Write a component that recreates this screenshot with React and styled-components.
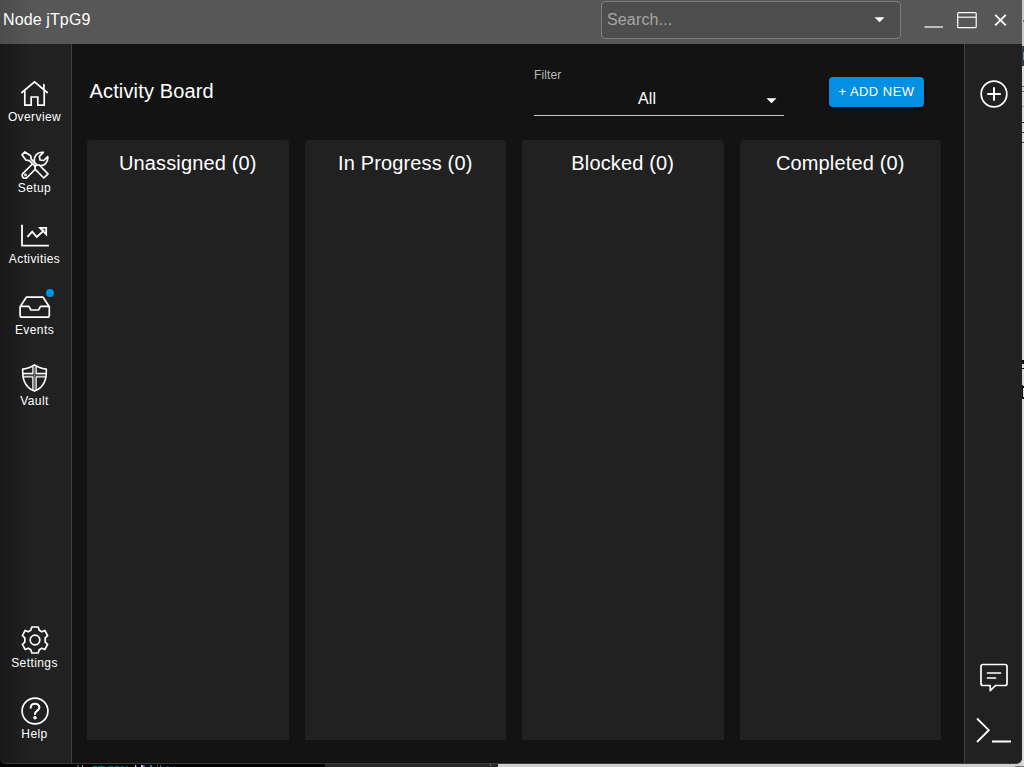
import React from "react";
import styled, { createGlobalStyle } from "styled-components";

const GlobalStyle = createGlobalStyle`
  * { box-sizing: border-box; }
  html, body { margin: 0; height: 100%; overflow: hidden; background: #d4d4d6; }
  body { font-family: "Liberation Sans", Arial, sans-serif; color: #fff; }
`;

const Desktop = styled.div`
  position: relative;
  width: 1024px;
  height: 767px;
  overflow: hidden;
  background: linear-gradient(90deg, #000 325px, #292929 325px, #292929 498px, #cfcfd1 498px);
`;

const Window = styled.div`
  display: flex;
  flex-direction: column;
  width: 1022px;
  height: 764px;
  background: #131313;
  border-bottom: 1px solid #3a3a3a;
  border-radius: 0 0 6px 6px;
  overflow: hidden;
`;

const TitleBar = styled.header`
  display: flex;
  align-items: center;
  flex: none;
  height: 44px;
  padding: 0 13px 4px 3px;
  background: linear-gradient(90deg, #4c4c4c, #575757 34px);
`;

const WindowTitle = styled.div`
  flex: 1;
  font-size: 16px;
  line-height: 20px;
  letter-spacing: 0.12px;
`;

const Search = styled.div`
  display: flex;
  align-items: center;
  justify-content: space-between;
  width: 300px;
  height: 38px;
  margin: 0 23px 0 0;
  padding: 0 15px 0 5px;
  border: 1px solid #7b7b7b;
  border-radius: 4px;
  background: #4e4e4e;
  color: #a6a6a6;
  font-size: 16px;
  letter-spacing: 0.15px;
`;

const WindowButtons = styled.div`
  display: flex;
  align-items: center;
  svg { display: block; }
`;

const Body = styled.div`
  display: flex;
  flex: 1;
  min-height: 0;
`;

const Sidebar = styled.nav`
  display: flex;
  flex-direction: column;
  width: 72px;
  padding: 36px 2px 0 0;
  border-right: 1px solid #404040;
  background: linear-gradient(90deg, #191919, #212121 32px);
`;

const NavItem = styled.div`
  position: relative;
  display: flex;
  flex-direction: column;
  align-items: center;
  flex: none;
  height: 71px;
  margin-top: ${(p) => (p.$push ? "auto" : 0)};
  font-size: 12px;
  line-height: 14px;
  letter-spacing: 0.4px;
  &:last-child { height: 66px; }
  svg { display: block; flex: none; }
`;

const NavLabel = styled.span`
  margin-top: 2px;
  white-space: nowrap;
`;

const Badge = styled.i`
  position: absolute;
  top: -4px;
  left: 46px;
  width: 8px;
  height: 8px;
  border-radius: 50%;
  background: #0390e3;
`;

const Main = styled.main`
  display: flex;
  flex-direction: column;
  flex: 1;
  padding: 0 23px 23px 15px;
`;

const Toolbar = styled.div`
  display: flex;
  align-items: flex-start;
  height: 96px;
  padding: 24px 17px 0 2.5px;
`;

const PageTitle = styled.h1`
  flex: 1;
  margin: 11px 0 0;
  font-size: 20px;
  line-height: 24px;
  font-weight: 400;
  letter-spacing: 0.15px;
`;

const FilterField = styled.div`
  width: 250px;
  height: 48px;
  margin-right: 45px;
  border-bottom: 1px solid #c4c4c4;
`;

const FilterLabel = styled.div`
  font-size: 12px;
  line-height: 14px;
  letter-spacing: 0.1px;
  color: #b8b8b8;
`;

const FilterValue = styled.div`
  display: flex;
  align-items: center;
  height: 33px;
  padding-right: 7px;
  font-size: 16px;
  span { flex: 1; padding: 1px 6px 0 0; text-align: center; letter-spacing: 0.15px; }
  svg { margin-top: 4px; }
`;

const AddButton = styled.button`
  width: 95px;
  height: 30px;
  margin-top: 9px;
  padding: 0 0 1px;
  border: 0;
  border-radius: 4px;
  background: #0390e3;
  box-shadow: 0 1px 3px #000;
  color: #fff;
  font: 13px "Liberation Sans", Arial, sans-serif;
  letter-spacing: 0.46px;
  white-space: nowrap;
`;

const Board = styled.div`
  display: grid;
  grid-template-columns: repeat(4, 1fr);
  gap: 16px;
  flex: 1;
`;

const Column = styled.section`
  padding-top: 11px;
  border-radius: 4px 4px 0 0;
  background: #212121;
  text-align: center;
  font-size: 20px;
  line-height: 24px;
  letter-spacing: 0.15px;
`;

const Rail = styled.aside`
  display: flex;
  flex-direction: column;
  align-items: center;
  width: 58px;
  padding: 36px 0 16px;
  border-left: 1px solid #404040;
  background: #212121;
  svg { display: block; flex: none; }
`;

const Spacer = styled.div`
  flex: 1;
`;

/* Slivers of the applications lying behind the window. */
const Speck = styled.i`
  position: absolute;
  left: ${(p) => p.$x}px;
  top: ${(p) => p.$y}px;
  width: ${(p) => p.$w}px;
  height: ${(p) => p.$h}px;
  background: ${(p) => p.$c};
`;

const specks = [
  [77, 765, 2, 2, "#4b4b4b"], [82, 765, 1, 2, "#c9b878"], [93, 766, 4, 1, "#087171"],
  [98, 766, 7, 1, "#086767"], [108, 766, 5, 1, "#075c60"], [115, 766, 4, 1, "#087171"],
  [121, 766, 2, 1, "#087171"], [126, 766, 2, 1, "#075c60"], [135, 765, 1, 2, "#c9c9c9"],
  [136, 765, 1, 2, "#2929a0"], [141, 765, 2, 2, "#d3cfc8"], [143, 765, 2, 2, "#3543b0"],
  [150, 765, 2, 2, "#1a8085"], [157, 765, 1, 2, "#315ca0"], [160, 765, 1, 2, "#1a8085"],
  [166, 766, 3, 1, "#064246"], [174, 766, 1, 1, "#064246"], [490, 764, 1, 2, "#777"],
  [1022, 0, 2, 46, "#c8cad0"], [1022, 46, 2, 20, "#30434f"], [1022, 66, 2, 701, "#dddddf"],
  [1023, 20, 1, 2, "#777"], [1023, 52, 1, 8, "#78909e"], [1022, 86, 2, 1, "#777"],
  [1022, 91, 2, 1, "#777"], [1022, 106, 2, 1, "#aaa"], [1022, 122, 2, 1, "#111"],
  [1022, 132, 2, 1, "#444"], [1022, 142, 2, 1, "#444"], [1022, 360, 2, 4, "#111"],
  [1022, 368, 2, 1, "#111"], [1022, 385, 1, 14, "#111"], [1023, 386, 1, 2, "#111"],
  [1023, 397, 1, 2, "#111"], [1015, 766, 9, 1, "#777"],
];

const Icon = ({ w = 28, h = 28, sw = 1.7, children }) => (
  <svg width={w} height={h} viewBox={`0 0 ${w} ${h}`} fill="none" stroke="#fff" strokeWidth={sw} strokeLinecap="round" strokeLinejoin="round">
    {children}
  </svg>
);

const Caret = () => (
  <svg width="11" height="6" viewBox="0 0 11 6"><path d="M0.5 0.3H10.5L5.5 5.3Z" fill="#fff" /></svg>
);

const HomeIcon = () => (
  <Icon>
    <path d="M.9 12.5L13.5 1.9L26.2 12.5M3.8 10.8V25.2H10.2V17H16.8V25.2H23.2V10.8M22.9 4.5V9.5" strokeLinejoin="miter" />
  </Icon>
);

const ToolsIcon = () => (
  <Icon sw={1.7}>
    <path d="M1 3.8L3.7 1L9.7 4.8L10.2 8.2L15.8 13.8L14.2 15.4L8.4 9.7L5 9.2Z" />
    <path d="M15.8 13.8L18.2 14L27 22.8L22.8 27L14 18.2L14.2 15.4" />
    <path d="M13.5 11.2C12.4 5.6 15.7 0.8 22.4 1.3L18.4 5.3L19 9L22.7 9.5L26.7 5.6C27.4 11.8 23 15.4 18.7 14.3M11.4 13L1.8 22.6C-.3 25.8 3.3 28.5 6 26.5L13.5 19" />
    <circle cx="4.5" cy="23.9" r=".5" />
  </Icon>
);

const ChartIcon = () => (
  <Icon sw={1.8}>
    <path d="M1 3.6V23.7H27" strokeLinecap="square" strokeLinejoin="miter" />
    <path d="M6.4 14.8L11.2 9.6L15.8 15L23.2 8.2M19 5.8H25.2V12.2Z" strokeLinejoin="miter" strokeLinecap="butt" />
  </Icon>
);

const InboxIcon = () => (
  <Icon w={32}>
    <path d="M7.3 4.2H24.1L30.3 13.7V22.2Q30.3 24.2 28.3 24.2H3.1Q1.1 24.2 1.1 22.2V13.7ZM1.5 13.4H9.9L11.9 17H19.5L21.5 13.4H29.9" />
  </Icon>
);

const ShieldIcon = () => (
  <Icon sw={1.6}>
    <path d="M13.5 .9C9.7 3.7 5.7 4.5 1.7 5.1C1.2 15.2 3.4 23.3 13.5 27.1C23.6 23.3 25.8 15.2 25.3 5.1C21.3 4.5 17.3 3.7 13.5 .9Z" />
    <path d="M11.9 3V9.5H1.9M15.1 3V9.5H25.1M2 12.8H11.9V26M25 12.8H15.1V26" strokeWidth="1.3" />
    <path d="M13.5 2V27M2 11.1H25" strokeWidth=".8" opacity=".4" />
  </Icon>
);

const GearIcon = () => (
  <Icon>
    <path d="M10.8 1H17.2L18.2 4.2L20.8 5.8L23.8 4.4L26.6 9.6L24.2 11.8V16.2L26.6 18.4L23.8 23.6L20.8 22.2L18.2 23.8L17.2 27H10.8L9.8 23.8L7.2 22.2L4.2 23.6L1.4 18.4L3.8 16.2V11.8L1.4 9.6L4.2 4.4L7.2 5.8L9.8 4.2Z" />
    <circle cx="14" cy="14" r="4.8" />
  </Icon>
);

const HelpIcon = () => (
  <Icon>
    <circle cx="14" cy="14" r="12.9" />
    <path d="M9.7 10.8C9.8 5.4 18.5 5.6 18.4 10.6C18.4 13.6 14 13.7 14 17" strokeWidth="2" />
    <circle cx="14" cy="20.8" r=".9" />
  </Icon>
);

const topNav = [
  ["Overview", HomeIcon], ["Setup", ToolsIcon], ["Activities", ChartIcon], ["Events", InboxIcon], ["Vault", ShieldIcon],
];
const bottomNav = [["Settings", GearIcon], ["Help", HelpIcon]];

export default function App() {
  return (
    <Desktop>
      <GlobalStyle />
      <Window>
        <TitleBar>
          <WindowTitle>Node jTpG9</WindowTitle>
          <Search><span>Search...</span><Caret /></Search>
          <WindowButtons>
            <svg width="85" height="20" viewBox="0 0 85 20" fill="none" stroke="#fff">
              <path d="M0.5 17H19" strokeWidth="1.2" />
              <rect x="33.7" y="2.7" width="18.5" height="15" rx="1" strokeWidth="1.2" />
              <path d="M33.7 7.2H52.2" strokeWidth="1.2" />
              <path d="M71.2 4.8L81.8 15.4M81.8 4.8L71.2 15.4" strokeWidth="1.8" />
            </svg>
          </WindowButtons>
        </TitleBar>
        <Body>
          <Sidebar>
            {topNav.map(([label, Glyph]) => (
              <NavItem key={label}>
                <Glyph />
                {label === "Events" && <Badge />}
                <NavLabel>{label}</NavLabel>
              </NavItem>
            ))}
            {bottomNav.map(([label, Glyph], i) => (
              <NavItem key={label} $push={i === 0}>
                <Glyph />
                <NavLabel>{label}</NavLabel>
              </NavItem>
            ))}
          </Sidebar>
          <Main>
            <Toolbar>
              <PageTitle>Activity Board</PageTitle>
              <FilterField>
                <FilterLabel>Filter</FilterLabel>
                <FilterValue><span>All</span><Caret /></FilterValue>
              </FilterField>
              <AddButton>+ ADD NEW</AddButton>
            </Toolbar>
            <Board>
              {["Unassigned", "In Progress", "Blocked", "Completed"].map((name) => (
                <Column key={name}>{name} (0)</Column>
              ))}
            </Board>
          </Main>
          <Rail>
            <Icon><circle cx="14" cy="14" r="12.8" /><path d="M14 7.2V20.8M7.2 14H20.8" strokeWidth="2" strokeLinecap="butt" /></Icon>
            <Spacer />
            <Icon h={30}><path d="M3 1.5H25Q27 1.5 27 3.5V20.5Q27 22.5 25 22.5H15.5L10.2 27.6V22.5H3Q1 22.5 1 20.5V3.5Q1 1.5 3 1.5ZM7.5 10H20.5M7.5 15H15.5" /></Icon>
            <svg width="36" height="54" viewBox="0 0 36 54" fill="none" stroke="#fff" strokeWidth="1.8"><path d="M1 25.5L12.8 37.2L1 49M16 48.5H35" /></svg>
          </Rail>
        </Body>
      </Window>
      {specks.map(([x, y, w, h, c]) => (
        <Speck key={`${x}-${y}`} $x={x} $y={y} $w={w} $h={h} $c={c} />
      ))}
    </Desktop>
  );
}
